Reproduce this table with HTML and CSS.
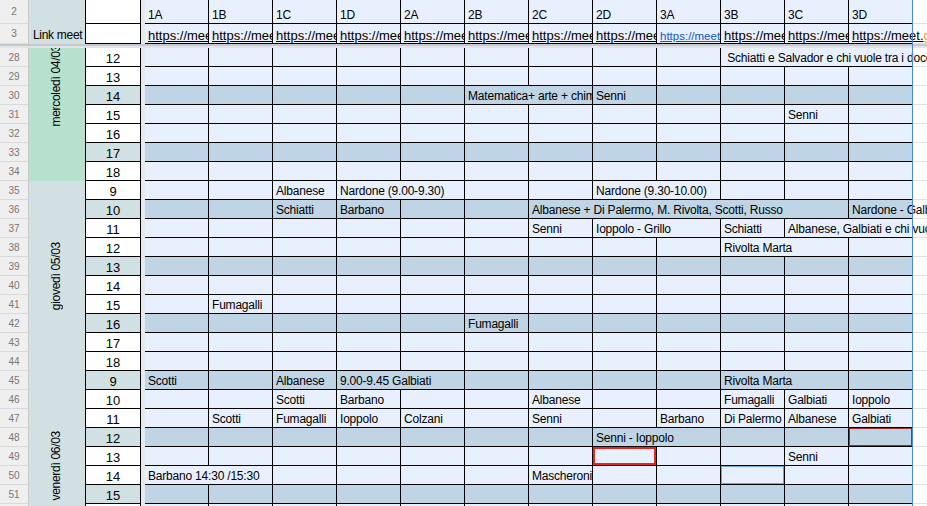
FILE: index.html
```html
<!DOCTYPE html>
<html lang="it">
<head>
  <meta charset="UTF-8">
  <meta name="viewport" content="width=device-width, initial-scale=1.0">
  <title>Orario Meet</title>
  <link rel="stylesheet" href="styles.css">
</head>
<body>
  <div class="sheet" id="sheet">
    <div class="freeze-col"></div>
    <div class="freeze-row"></div>
    <div class="sel-line"></div>

    <div class="daylabel day-wed"><div class="inner shifted"><span class="vtext">mercoledì 04/03</span></div></div>
    <div class="daylabel day-thu"><div class="inner"><span class="vtext">giovedì 05/03</span></div></div>
    <div class="daylabel day-fri"><div class="inner"><span class="vtext">venerdì 06/03</span></div></div>
  </div>

  <script>
    const classi = ['1A', '1B', '1C', '1D', '2A', '2B', '2C', '2D', '3A', '3B', '3C', '3D'];
    const codici = ['kqp-wtrz-bma', 'xdf-ouhe-ncs', 'rzi-pqla-vve', 'hme-kjdu-fto', 'bnw-zzqe-aru',
      'tgo-yqmp-dik', 'cje-vaxw-lno', 'pus-hfkr-gew', 'ays-dmno-qxt', 'lwe-trib-sjc', 'ofu-cgna-mep', 'zvh-ibse-kdy'];
    const sheet = document.getElementById('sheet');

    // riga = numero riga del foglio, cells = indice classe -> [testo, colonne, classe extra]
    const righe = [
      { n: 28, h: 12, cells: { 9: [' Schiatti e Salvador e chi vuole tra i docenti', 3, 'spill'] } },
      { n: 29, h: 13, cells: {} },
      { n: 30, h: 14, cells: { 5: ['Matematica+ arte + chimica', 2], 7: ['Senni'] } },
      { n: 31, h: 15, cells: { 10: ['Senni'] } },
      { n: 32, h: 16, cells: {} },
      { n: 33, h: 17, cells: {} },
      { n: 34, h: 18, cells: {} },
      { n: 35, h: 9, cells: { 2: ['Albanese'], 3: ['Nardone (9.00-9.30)', 2], 7: ['Nardone (9.30-10.00)', 2] } },
      { n: 36, h: 10, cells: { 2: ['Schiatti'], 3: ['Barbano'], 6: ['Albanese + Di Palermo, M. Rivolta, Scotti, Russo', 5], 11: ['Nardone - Galbiati', 1, 'spill'] } },
      { n: 37, h: 11, cells: { 6: ['Senni'], 7: ['Ioppolo - Grillo', 2], 9: ['Schiatti'], 10: ['Albanese, Galbiati e chi vuole', 2, 'spill'] } },
      { n: 38, h: 12, cells: { 9: ['Rivolta Marta', 2] } },
      { n: 39, h: 13, cells: {} },
      { n: 40, h: 14, cells: {} },
      { n: 41, h: 15, cells: { 1: ['Fumagalli'] } },
      { n: 42, h: 16, cells: { 5: ['Fumagalli'] } },
      { n: 43, h: 17, cells: {} },
      { n: 44, h: 18, cells: {} },
      { n: 45, h: 9, cells: { 0: ['Scotti'], 2: ['Albanese'], 3: ['9.00-9.45 Galbiati', 2], 9: ['Rivolta Marta', 2] } },
      { n: 46, h: 10, cells: { 2: ['Scotti'], 3: ['Barbano'], 6: ['Albanese'], 9: ['Fumagalli'], 10: ['Galbiati'], 11: ['Ioppolo'] } },
      { n: 47, h: 11, cells: { 1: ['Scotti'], 2: ['Fumagalli'], 3: ['Ioppolo'], 4: ['Colzani'], 6: ['Senni'], 8: ['Barbano'], 9: ['Di Palermo'], 10: ['Albanese'], 11: ['Galbiati'] } },
      { n: 48, h: 12, cells: { 7: ['Senni - Ioppolo', 2], 11: ['', 1, 'mark-dark'] } },
      { n: 49, h: 13, cells: { 7: ['', 1, 'mark-red'], 10: ['Senni'] } },
      { n: 50, h: 14, cells: { 0: ['Barbano 14:30 /15:30', 2], 6: ['Mascheroni'], 9: ['', 1, 'mark-blue'] } },
      { n: 51, h: 15, cells: {} },
      { n: 52, h: 16, cells: {} }
    ];

    function add(row, col, span, cls, text) {
      const el = document.createElement('div');
      el.className = cls;
      el.style.gridArea = row + ' / ' + col + ' / ' + (row + 1) + ' / ' + (col + span);
      if (text !== undefined && text !== '') el.textContent = text;
      sheet.appendChild(el);
      return el;
    }

    // riga 2: intestazioni classi
    add(1, 1, 1, 'rowhead', '2');
    add(1, 2, 1, 'daytop');
    add(1, 3, 1, 'hour');
    classi.forEach((c, i) => add(1, 5 + i, 1, 'c head', c));
    add(1, 17, 1, 'extra');

    // riga 3: link meet
    add(2, 1, 1, 'rowhead', '3');
    add(2, 2, 1, 'daytop link-title', 'Link meet');
    add(2, 3, 1, 'hour');
    classi.forEach((c, i) => {
      if (c === '3A') {
        add(2, 5 + i, 1, 'c link small', 'https://meet.google.com/' + codici[i]);
      } else if (c === '3D') {
        const el = add(2, 5 + i, 1, 'c link spill', 'https://meet.');
        const g = document.createElement('span');
        g.className = 'orange';
        g.textContent = 'g';
        el.appendChild(g);
      } else {
        add(2, 5 + i, 1, 'c link', 'https://meet.google.com/' + codici[i]);
      }
    });
    add(2, 17, 1, 'extra');

    righe.forEach(r => {
      const g = r.n - 24;
      const sh = r.n % 3 === 0 ? ' shade' : '';
      add(g, 1, 1, 'rowhead', r.n);
      add(g, 3, 1, 'hour' + sh, r.h);
      let i = 0;
      while (i < classi.length) {
        const spec = r.cells[i];
        if (spec) {
          const span = spec[1] || 1;
          add(g, 5 + i, span, 'c' + sh + (spec[2] ? ' ' + spec[2] : ''), spec[0]);
          i += span;
        } else {
          add(g, 5 + i, 1, 'c' + sh);
          i++;
        }
      }
      add(g, 17, 1, 'extra');
    });
  </script>
</body>
</html>
```

FILE: styles.css
```css
html, body {
  margin: 0;
  overflow: hidden;
  background: #fff;
}
body {
  font-family: "Liberation Sans", Arial, sans-serif;
  font-size: 12px;
  color: #000;
}
.sheet {
  display: grid;
  grid-template-columns: 29px 56px 56px 4px repeat(12, 64px) 1fr;
  grid-template-rows: 24px 20px 4px repeat(25, 19px);
  width: 927px;
  height: 506px;
  overflow: hidden;
}
.sheet > div {
  box-sizing: border-box;
  min-width: 0;
}

/* freeze bars and selected column line */
.freeze-col {
  grid-area: 1 / 4 / -1 / 5;
  background: #e4eaf0;
}
.freeze-row {
  grid-area: 3 / 1 / 4 / -1;
  background: #e0e4e8;
  border-top: 2px solid #c6cace;
  z-index: 1;
}
.sel-line {
  grid-area: 1 / 17 / -1 / 18;
  border-left: 1px solid #4a86e8;
  margin-left: -1px;
  z-index: 2;
  pointer-events: none;
}

/* row numbers */
.rowhead {
  display: flex;
  align-items: center;
  justify-content: center;
  background: #efefef;
  color: #777;
  font-size: 10px;
  border-bottom: 1px solid #d9d9d9;
  border-right: 1px solid #c8c8c8;
}

/* day column */
.daytop {
  background: #d0e0e3;
}
.link-title {
  padding: 4px 0 0 4px;
  line-height: 15px;
  letter-spacing: -0.3px;
  white-space: pre;
}
.daylabel {
  grid-column: 2;
  overflow: hidden;
  background: #d0e0e3;
}
.day-wed {
  grid-row: 4 / 11;
  background: #b7e1cd;
}
.day-thu {
  grid-row: 11 / 21;
}
.day-fri {
  grid-row: 21 / 29;
}
.daylabel .inner {
  height: 190px;
  display: flex;
  align-items: center;
  justify-content: center;
}
.daylabel .shifted {
  margin-top: -57px;
}
.vtext {
  writing-mode: vertical-rl;
  transform: rotate(180deg);
  letter-spacing: -0.3px;
  white-space: nowrap;
  margin-left: -2px;
}

/* hour column */
.hour {
  background: #fff;
  border: 1px solid #000;
  border-top: 0;
  text-align: center;
  font-size: 13px;
  line-height: 15px;
  padding-top: 3px;
}
.hour.shade {
  background: #d0e0e3;
}

/* class cells */
.c {
  background: #e8f0fe;
  border-right: 1px solid #000;
  border-bottom: 1px solid #000;
  padding: 3px 3px 0;
  line-height: 15px;
  letter-spacing: -0.2px;
  white-space: pre;
  overflow: hidden;
}
.c.shade {
  background: #bfd4e4;
}
.c.head {
  padding-top: 8px;
}
.c.link {
  padding-top: 4px;
  font-size: 13px;
  letter-spacing: 0;
  text-decoration: underline;
}
.c.small {
  color: #1155cc;
  font-size: 11.5px;
  padding-top: 5px;
}
.c.spill {
  overflow: visible;
}
.orange {
  color: #f29a2e;
}
.mark-dark {
  box-shadow: inset 0 0 0 1px #a4302a;
}
.mark-red {
  box-shadow: inset 0 0 0 2px #e8261f;
}
.mark-blue {
  box-shadow: inset 0 0 0 1px #6fa8dc;
}

.extra {
  border-bottom: 1px solid #e2e2e2;
}
```
